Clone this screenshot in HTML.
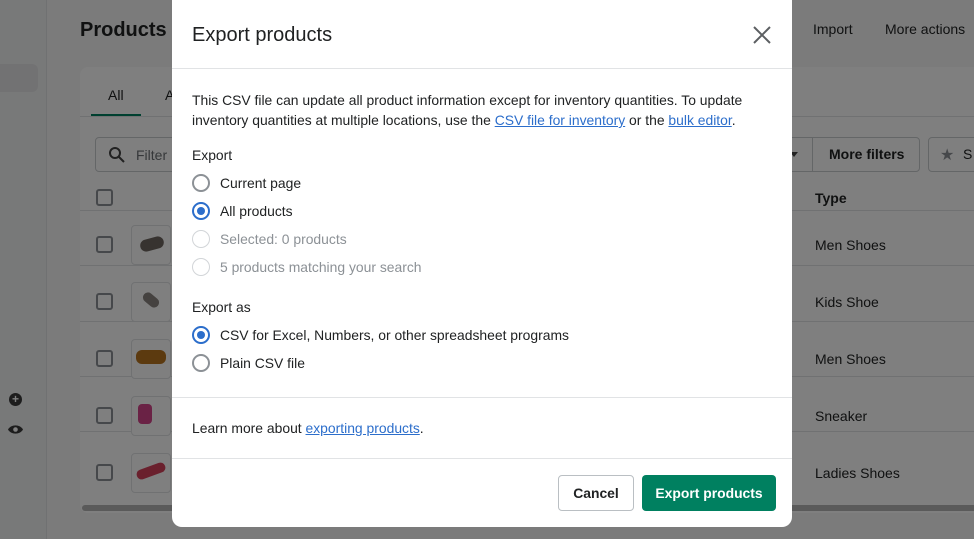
<!DOCTYPE html>
<html><head><meta charset="utf-8"><style>
*{box-sizing:border-box;margin:0;padding:0}
html,body{width:974px;height:539px;overflow:hidden}
body{position:relative;background:#f6f6f7;font-family:"Liberation Sans",sans-serif;color:#202223}
.abs{position:absolute}
.bg{color:#202223}
.cb{position:absolute;width:17px;height:17px;border:2px solid #8c9196;border-radius:3px}
.thumb{position:absolute;width:40px;height:40px;border:1px solid #e1e3e5;border-radius:4px;background:#fff}
.rowline{position:absolute;left:80px;width:894px;height:1px;background:#e1e3e5}
.overlay{position:absolute;left:0;top:0;width:974px;height:539px;background:rgba(0,0,0,0.5)}
.modal{position:absolute;left:172px;top:0;width:620px;height:527px;background:#fff;border-radius:0 0 10px 10px;font-size:13.9px}
.radio{position:absolute;left:20px;width:18px;height:18px;border:2px solid #8c9196;border-radius:50%}
.radio.on{border-color:#2c6ecb}
.radio.on::after{content:"";position:absolute;left:3px;top:3px;width:8px;height:8px;border-radius:50%;background:#2c6ecb}
.radio.dis{border-color:#d2d5d8;border-width:1.5px}
.lbl{position:absolute;left:48px}
a{color:#2c6ecb;text-decoration:underline}
</style></head><body>
<div class="abs" style="left:0;top:0;width:46px;height:539px;background:#f1f2f3"></div>
<div class="abs" style="left:46px;top:0;width:1px;height:539px;background:#e1e3e5"></div>
<div class="abs" style="left:0;top:64px;width:38px;height:28px;background:#e4e5e7;border-radius:0 6px 6px 0"></div>
<div class="abs bg" style="left:80px;top:19px;font-size:20px;font-weight:bold">Products</div>
<div class="abs bg" style="left:813px;top:21px;font-size:14px">Import</div>
<div class="abs bg" style="left:885px;top:21px;font-size:14px">More actions</div>
<div class="abs" style="left:80px;top:67px;width:900px;height:446px;background:#fff;border-radius:8px"></div>
<div class="abs bg" style="left:108px;top:87px;font-size:14px">All</div>
<div class="abs bg" style="left:165px;top:87px;font-size:14px">A</div>
<div class="abs" style="left:91px;top:114px;width:50px;height:3px;background:#008060"></div>
<div class="rowline" style="top:116px"></div>
<div class="abs" style="left:95px;top:137px;width:100px;height:35px;border:1px solid #c9cccf;border-radius:4px"></div>
<svg class="abs" style="left:108px;top:146px" width="18" height="18" viewBox="0 0 18 18"><circle cx="7" cy="7" r="5" fill="none" stroke="#444" stroke-width="2"/><path d="M11 11l5 5" stroke="#444" stroke-width="2"/></svg>
<div class="abs" style="left:136px;top:147px;font-size:14px;color:#6d7175">Filter</div>
<div class="abs" style="left:780px;top:137px;width:140px;height:35px;border:1px solid #c9cccf;border-radius:0 4px 4px 0"></div>
<div class="abs" style="left:812px;top:137px;width:1px;height:35px;background:#c9cccf"></div>
<div class="abs" style="left:790px;top:152px;border:4px solid transparent;border-top:5px solid #444"></div>
<div class="abs bg" style="left:829px;top:146px;font-size:14px;font-weight:bold">More filters</div>
<div class="abs" style="left:928px;top:137px;width:60px;height:35px;border:1px solid #c9cccf;border-radius:4px"></div>
<div class="abs" style="left:940px;top:145px;font-size:16px;color:#8c9196">★</div>
<div class="abs bg" style="left:963px;top:146px;font-size:14px">S</div>
<div class="cb" style="left:96px;top:189px"></div>
<div class="abs bg" style="left:815px;top:190px;font-size:14px;font-weight:bold">Type</div>
<div class="rowline" style="top:210px"></div>
<div class="rowline" style="top:265px"></div>
<div class="rowline" style="top:321px"></div>
<div class="rowline" style="top:376px"></div>
<div class="rowline" style="top:431px"></div>
<div class="cb" style="left:96px;top:236px"></div><div class="thumb" style="left:131px;top:225px"></div>
<div class="cb" style="left:96px;top:293px"></div><div class="thumb" style="left:131px;top:282px"></div>
<div class="cb" style="left:96px;top:350px"></div><div class="thumb" style="left:131px;top:339px"></div>
<div class="cb" style="left:96px;top:407px"></div><div class="thumb" style="left:131px;top:396px"></div>
<div class="cb" style="left:96px;top:464px"></div><div class="thumb" style="left:131px;top:453px"></div>
<div class="abs" style="left:140px;top:238px;width:24px;height:12px;background:#6e6660;border-radius:6px;transform:rotate(-15deg)"></div>
<div class="abs" style="left:142px;top:295px;width:18px;height:10px;background:#8a8580;border-radius:5px;transform:rotate(40deg)"></div>
<div class="abs" style="left:136px;top:350px;width:30px;height:14px;background:#b8741f;border-radius:6px"></div>
<div class="abs" style="left:138px;top:404px;width:14px;height:20px;background:#d4458a;border-radius:4px"></div>
<div class="abs" style="left:136px;top:466px;width:30px;height:10px;background:#d4405a;border-radius:5px;transform:rotate(-20deg)"></div>
<div class="abs bg" style="left:815px;top:237px;font-size:14px">Men Shoes</div>
<div class="abs bg" style="left:815px;top:294px;font-size:14px">Kids Shoe</div>
<div class="abs bg" style="left:815px;top:351px;font-size:14px">Men Shoes</div>
<div class="abs bg" style="left:815px;top:408px;font-size:14px">Sneaker</div>
<div class="abs bg" style="left:815px;top:465px;font-size:14px">Ladies Shoes</div>
<div class="abs" style="left:82px;top:505px;width:900px;height:6px;background:#b5b5b5;border-radius:3px"></div>
<div class="abs" style="left:9px;top:393px;width:13px;height:13px;border-radius:50%;background:#3a3a3a;color:#fff;font-size:12px;line-height:13px;text-align:center;font-weight:bold">+</div>
<svg class="abs" style="left:7px;top:423px" width="17" height="13" viewBox="0 0 17 13"><path d="M1 6.5C4 1 13 1 16 6.5 13 12 4 12 1 6.5z" fill="#3a3a3a"/><circle cx="8.5" cy="6.5" r="2.3" fill="#fff"/></svg>
<div class="overlay"></div>

<div class="modal">
<div class="abs" style="left:20px;top:24px;font-size:20px;color:#202223">Export products</div>
<svg class="abs" style="left:581px;top:26px" width="18" height="18" viewBox="0 0 18 18"><path d="M1 1l16 16M17 1L1 17" stroke="#5c5f62" stroke-width="2"/></svg>
<div class="abs" style="left:0;top:68px;width:620px;height:1px;background:#e1e3e5"></div>
<div class="abs" style="left:20px;top:90px;width:595px;line-height:20px">This CSV file can update all product information except for inventory quantities. To update inventory quantities at multiple locations, use the <a>CSV file for inventory</a> or the <a>bulk editor</a>.</div>
<div class="abs" style="left:20px;top:147px">Export</div>
<div class="radio" style="top:174px"></div><div class="lbl" style="top:175px">Current page</div>
<div class="radio on" style="top:202px"></div><div class="lbl" style="top:203px">All products</div>
<div class="radio dis" style="top:230px"></div><div class="lbl" style="top:231px;color:#8c9196">Selected: 0 products</div>
<div class="radio dis" style="top:258px"></div><div class="lbl" style="top:259px;color:#8c9196">5 products matching your search</div>
<div class="abs" style="left:20px;top:299px">Export as</div>
<div class="radio on" style="top:326px"></div><div class="lbl" style="top:327px">CSV for Excel, Numbers, or other spreadsheet programs</div>
<div class="radio" style="top:354px"></div><div class="lbl" style="top:355px">Plain CSV file</div>
<div class="abs" style="left:0;top:397px;width:620px;height:1px;background:#e1e3e5"></div>
<div class="abs" style="left:20px;top:420px">Learn more about <a>exporting products</a>.</div>
<div class="abs" style="left:0;top:458px;width:620px;height:1px;background:#e1e3e5"></div>
<div class="abs" style="left:386px;top:475px;width:76px;height:36px;border:1px solid #babfc3;border-radius:4px;text-align:center;line-height:34px;font-weight:bold;color:#202223">Cancel</div>
<div class="abs" style="left:470px;top:475px;width:134px;height:36px;background:#008060;border-radius:4px;text-align:center;line-height:36px;font-weight:bold;color:#fff">Export products</div>
</div>
</body></html>
